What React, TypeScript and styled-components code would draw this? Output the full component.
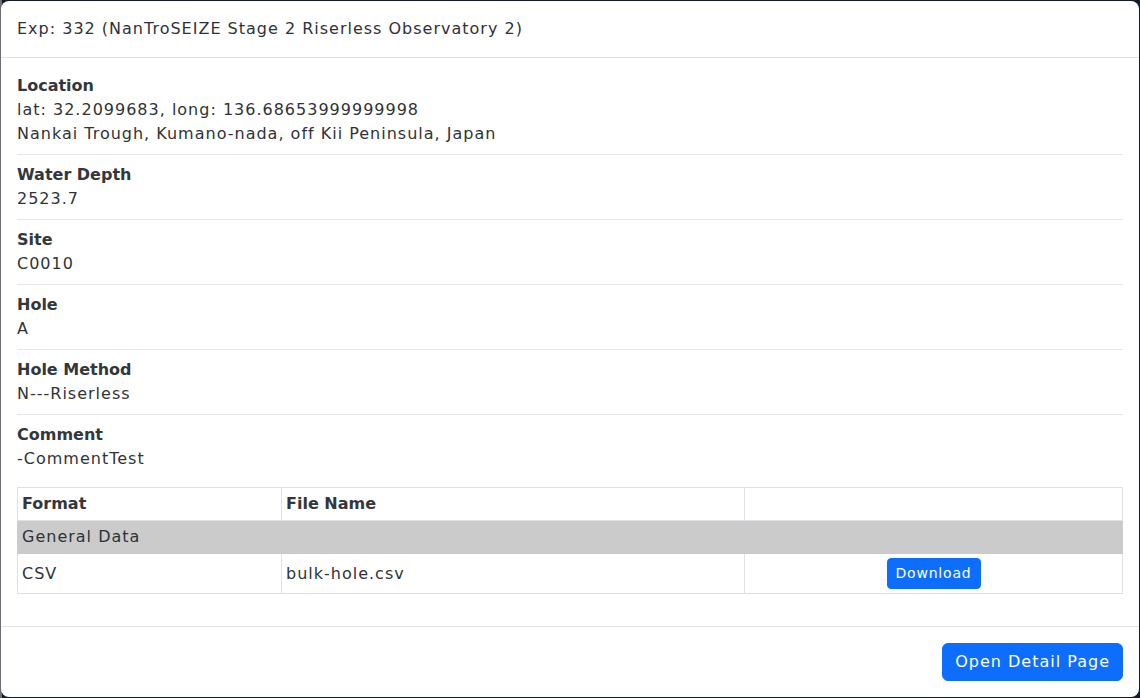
import React from 'react';
import styled, { createGlobalStyle } from 'styled-components';

const GlobalStyle = createGlobalStyle`
  html, body {
    margin: 0;
    padding: 0;
    background: #141a26;
  }
  body {
    font-family: "DejaVu Sans", "Noto Sans", sans-serif;
    letter-spacing: 1px;
    color: #212529;
  }
`;

type Field = { label: string; lines: string[] };

const fields: Field[] = [
  {
    label: 'Location',
    lines: ['lat: 32.2099683, long: 136.68653999999998', 'Nankai Trough, Kumano-nada, off Kii Peninsula, Japan'],
  },
  { label: 'Water Depth', lines: ['2523.7'] },
  { label: 'Site', lines: ['C0010'] },
  { label: 'Hole', lines: ['A'] },
  { label: 'Hole Method', lines: ['N---Riserless'] },
  { label: 'Comment', lines: ['-CommentTest'] },
];

const App: React.FC = () => {
  return (
    <>
      <GlobalStyle />
      <Backdrop>
        <Modal>
          <Header>Exp: 332 (NanTroSEIZE Stage 2 Riserless Observatory 2)</Header>
          <Body>
            {fields.map((f, i) => (
              <Item key={f.label} $last={i === fields.length - 1}>
                <Label>{f.label}</Label>
                {f.lines.map((l) => (
                  <Value key={l}>{l}</Value>
                ))}
              </Item>
            ))}
            <Table>
              <colgroup>
                <col style={{ width: 264 }} />
                <col style={{ width: 463 }} />
                <col />
              </colgroup>
              <thead>
                <tr>
                  <Th>Format</Th>
                  <Th>File Name</Th>
                  <Th />
                </tr>
              </thead>
              <tbody>
                <GroupRow>
                  <Td colSpan={3}>General Data</Td>
                </GroupRow>
                <tr>
                  <Td>CSV</Td>
                  <Td>bulk-hole.csv</Td>
                  <Td $center>
                    <SmallButton>Download</SmallButton>
                  </Td>
                </tr>
              </tbody>
            </Table>
          </Body>
          <Footer>
            <PrimaryButton>Open Detail Page</PrimaryButton>
          </Footer>
        </Modal>
      </Backdrop>
    </>
  );
};

export default App;

const Backdrop = styled.div`
  width: 1140px;
  height: 698px;
  padding: 1px;
  box-sizing: border-box;
  background: linear-gradient(90deg, #6b6e75 0px, #6b6e75 2px, #141a26 2px);
`;

const Modal = styled.div`
  width: 1138px;
  height: 696px;
  background: #fff;
  border-radius: 8px;
  display: flex;
  flex-direction: column;
  overflow: hidden;
`;

const Header = styled.div`
  height: 56px;
  padding: 0 16px;
  display: flex;
  align-items: center;
  font-size: 16px;
  line-height: 24px;
  color: #2f3337;
  border-bottom: 1px solid #dee2e6;
`;

const Body = styled.div`
  flex: 1;
  padding: 16px;
`;

const Item = styled.div<{ $last: boolean }>`
  margin-bottom: ${(p) => (p.$last ? '16px' : '8px')};
  padding-bottom: ${(p) => (p.$last ? '0' : '8px')};
  border-bottom: ${(p) => (p.$last ? 'none' : '1px solid #e5e7ea')};
`;

const Label = styled.div`
  font-size: 16px;
  line-height: 24px;
  font-weight: 700;
  letter-spacing: 0;
  color: #33373b;
`;

const Value = styled.div`
  font-size: 16px;
  line-height: 24px;
  color: #2f3337;
`;

const Table = styled.table`
  width: 100%;
  border-collapse: collapse;
  table-layout: fixed;
  font-size: 16px;
  line-height: 24px;
  color: #2f3337;
`;

const Th = styled.th`
  text-align: left;
  font-weight: 700;
  letter-spacing: 0;
  color: #33373b;
  padding: 4px;
  border: 1px solid #dee2e6;
`;

const Td = styled.td<{ $center?: boolean }>`
  padding: 4px;
  border: 1px solid #dee2e6;
  text-align: ${(p) => (p.$center ? 'center' : 'left')};
`;

const GroupRow = styled.tr`
  background: #cbcbcb;
  td {
    border-color: #cbcbcb;
  }
`;

const SmallButton = styled.button`
  font-family: inherit;
  letter-spacing: 0.8px;
  font-size: 14px;
  line-height: 21px;
  padding: 4px 8px;
  border: 1px solid #0d6efd;
  border-radius: 4px;
  background: #0d6efd;
  color: #fff;
  vertical-align: middle;
`;

const Footer = styled.div`
  border-top: 1px solid #dee2e6;
  padding: 12px;
  display: flex;
  justify-content: flex-end;
`;

const PrimaryButton = styled.button`
  font-family: inherit;
  letter-spacing: 1px;
  font-size: 16px;
  line-height: 24px;
  padding: 6px 12px;
  margin: 4px;
  border: 1px solid #0d6efd;
  border-radius: 6px;
  background: #0d6efd;
  color: #fff;
`;
